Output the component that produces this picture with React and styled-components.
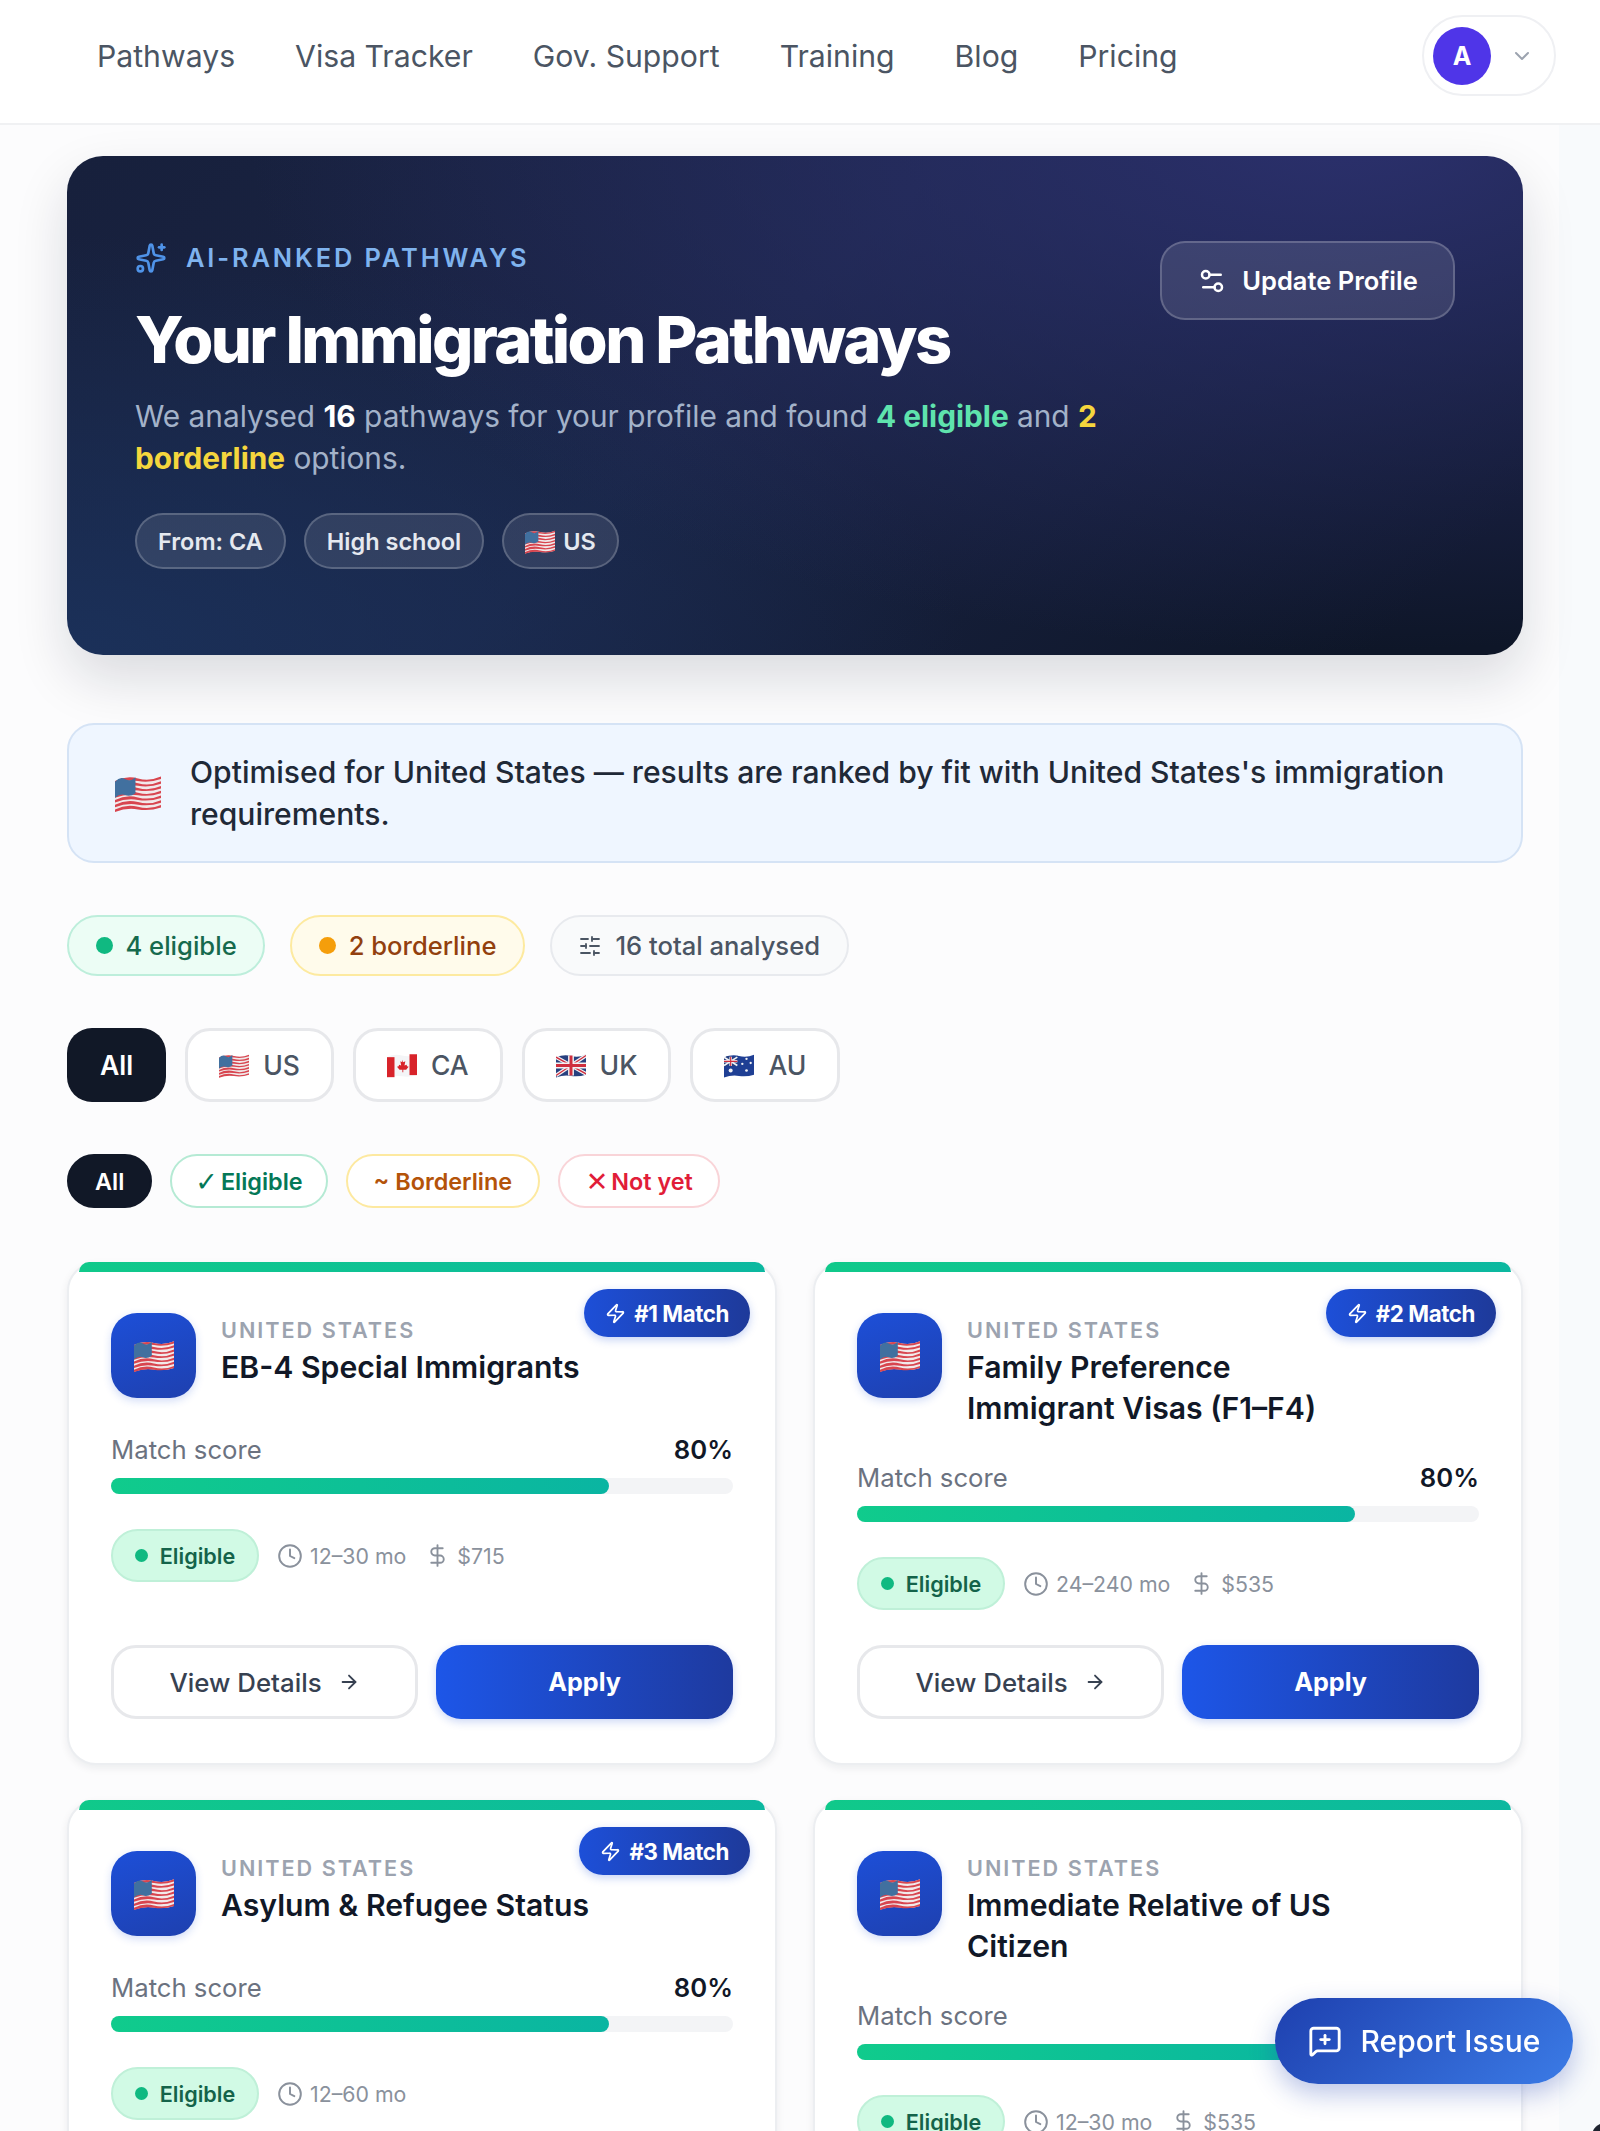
import styled, { createGlobalStyle } from "styled-components"
import {
  ArrowRight,
  ChevronDown,
  Clock,
  DollarSign,
  MessageSquarePlus,
  Settings2,
  SlidersHorizontal,
  Sparkles,
  Zap,
} from "lucide-react"

const FONT = `Inter, "Noto Sans", "Liberation Sans", sans-serif`

const GlobalStyle = createGlobalStyle`
  * { box-sizing: border-box; }
  html, body { margin: 0; padding: 0; height: 100%; overflow: hidden; }
  body {
    background: linear-gradient(90deg, #fcfcfd 1559px, #f8fafc 1559px);
    font-family: ${FONT};
  }
  #root { height: 100vh; overflow: hidden; }
`

// wavy stripe helper for the little emoji style flags
const wave = (y, h, x0 = 0, x1 = 36) => {
  const m = (x0 + x1) / 2
  return `M${x0} ${y + 2}Q${(x0 + m) / 2} ${y - 2.5} ${m} ${y}T${x1} ${y - 1.5}V${y - 1.5 + h}Q${(m + x1) / 2} ${y + h + 1.5} ${m} ${y + h}T${x0} ${y + 2 + h}Z`
}

function Flag({ code, size = 36 }) {
  const h = (size * 30) / 36
  return (
    <svg width={size} height={h} viewBox="0 0 36 30" style={{ flexShrink: 0, display: "block" }}>
      {code === "US" && (
        <>
          <path d={wave(3.5, 24)} fill="#f1e9ea" />
          {[0, 1, 2, 3, 4, 5, 6].map((i) => (
            <path key={i} d={wave(3.5 + i * 3.7, 2)} fill="#d8454f" />
          ))}
          <path d={wave(4, 12.5, 0, 16)} fill="#41709f" />
        </>
      )}
      {code === "CA" && (
        <>
          <path d={wave(3, 25)} fill="#f4f5f7" />
          <path d="M0 5h9v24H0z" fill="#d8232a" />
          <path d="M27 1.5h9v25h-9z" fill="#d8232a" />
          <path d="M18 8l1.6 3 2.4-1-1 5 2.5-1 .5 2 2 .5-3 3.5h-3.5v3h-1v-3H15l-3-3.5 2-.5.5-2 2.5 1-1-5 2.4 1z" fill="#d8232a" />
        </>
      )}
      {code === "UK" && (
        <>
          <path d={wave(3.5, 24)} fill="#27407f" />
          <path d="M0 5l36 20M36 3L0 27" stroke="#f2f2f4" strokeWidth="4.5" />
          <path d="M0 5l36 20M36 3L0 27" stroke="#cf2e3e" strokeWidth="1.6" />
          <path d="M18 3v24M0 15h36" stroke="#f2f2f4" strokeWidth="7" />
          <path d="M18 3v24M0 15h36" stroke="#cf2e3e" strokeWidth="3.6" />
        </>
      )}
      {code === "AU" && (
        <>
          <path d={wave(3.5, 24)} fill="#1f3f94" />
          <path d={wave(4.5, 11, 0, 16)} fill="#27407f" />
          <path d="M0 5l16 10M16 5L0 15" stroke="#f2f2f4" strokeWidth="2" />
          <path d="M8 4.5v11M0 10h16" stroke="#f2f2f4" strokeWidth="3" />
          <path d="M8 4.5v11M0 10h16" stroke="#cf2e3e" strokeWidth="1.4" />
          <circle cx="8" cy="21" r="2.4" fill="#f2f2f4" />
          <circle cx="27" cy="7" r="1.4" fill="#f2f2f4" />
          <circle cx="22" cy="13" r="1.4" fill="#f2f2f4" />
          <circle cx="32" cy="12" r="1.4" fill="#f2f2f4" />
          <circle cx="27" cy="21" r="1.6" fill="#f2f2f4" />
        </>
      )}
    </svg>
  )
}

const Nav = styled.header`
  height: 125px;
  background: #fff;
  border-bottom: 2px solid #f0f1f3;
  display: flex;
  align-items: center;
  justify-content: space-between;
  padding: 0 44px 12px 97px;
`
const NavLinks = styled.nav`
  display: flex;
  gap: 60px;
`
const NavLink = styled.a`
  font-size: 30.2px;
  color: #4b5563;
  font-weight: 400;
`
const UserPill = styled.div`
  width: 134px;
  height: 81px;
  border: 2px solid #eff0f3;
  border-radius: 41px;
  display: flex;
  align-items: center;
  gap: 19px;
  padding-left: 9px;
  color: #9ca3af;
`
const Avatar = styled.div`
  width: 58px;
  height: 58px;
  border-radius: 50%;
  background: #4f35e8;
  color: #fff;
  font-size: 25px;
  font-weight: 700;
  display: flex;
  align-items: center;
  justify-content: center;
`

const Main = styled.main`
  width: 1590px;
  padding: 31px 67px 0;
`
const Hero = styled.section`
  height: 499px;
  border-radius: 36px;
  padding: 85px 68px;
  display: flex;
  justify-content: space-between;
  align-items: flex-start;
  color: #fff;
  background:
    radial-gradient(1100px 520px at 88% -5%, rgba(43, 48, 108, 1), rgba(43, 48, 108, 0) 100%),
    radial-gradient(900px 420px at 0% 100%, rgba(27, 50, 92, 0.9), rgba(27, 50, 92, 0) 100%),
    linear-gradient(135deg, #17203c 0%, #1a2445 45%, #0e1628 92%);
  box-shadow: 0 24px 54px rgba(15, 23, 42, 0.14);
`
const HeroBody = styled.div`
  width: 1000px;
`
const Eyebrow = styled.div`
  display: flex;
  align-items: center;
  gap: 19px;
  height: 31px;
  margin-top: 1px;
  color: #7fb3ee;
  font-size: 25.4px;
  font-weight: 600;
  letter-spacing: 2.9px;
`
const HeroTitle = styled.h1`
  margin: 28px 0 0;
  font-size: 64.8px;
  line-height: 78px;
  font-weight: 800;
  letter-spacing: -2.6px;
  color: #fff;
`
const HeroText = styled.p`
  margin: 16px 0 0;
  font-size: 29.8px;
  line-height: 42px;
  color: #a3b2c9;
`
const Hl = styled.strong`
  color: ${(p) => p.$color};
  font-weight: 700;
`
const HeroTags = styled.div`
  display: flex;
  gap: 18px;
  margin-top: 34px;
`
const HeroTag = styled.span`
  height: 56px;
  padding: 0 21px;
  border-radius: 28px;
  border: 2px solid rgba(255, 255, 255, 0.2);
  background: rgba(255, 255, 255, 0.1);
  color: #e5e9f0;
  font-size: 23.5px;
  font-weight: 600;
  display: flex;
  align-items: center;
  gap: 8px;
`
const ProfileButton = styled.button`
  width: 295px;
  height: 79px;
  flex-shrink: 0;
  border-radius: 25px;
  border: 2px solid rgba(255, 255, 255, 0.2);
  background: rgba(255, 255, 255, 0.11);
  color: #fff;
  font: 600 25.5px ${FONT};
  display: flex;
  align-items: center;
  justify-content: center;
  gap: 15px;
`

const Notice = styled.div`
  margin-top: 68px;
  height: 140px;
  padding: 0 46px;
  border-radius: 27px;
  border: 2px solid #d5e3f5;
  background: #eff6ff;
  display: flex;
  align-items: center;
  gap: 29px;
  color: #1f2937;
  font-size: 30.1px;
  line-height: 42.5px;
  font-weight: 500;
`

const Row = styled.div`
  display: flex;
  margin-top: ${(p) => p.$top}px;
  gap: ${(p) => p.$gap}px;
`
const stat = {
  green: ["#ecfdf5", "#bdeedb", "#166a4d"],
  amber: ["#fffbeb", "#fdeaa0", "#92400e"],
  gray: ["#f9fafb", "#e8eaee", "#4b5563"],
}
const StatPill = styled.div`
  height: 61px;
  padding: 0 26.5px;
  border-radius: 31px;
  border: 2px solid ${(p) => stat[p.$tone][1]};
  background: ${(p) => stat[p.$tone][0]};
  color: ${(p) => stat[p.$tone][2]};
  font-size: 25.6px;
  font-weight: 500;
  display: flex;
  align-items: center;
  gap: 13px;
`
const Dot = styled.span`
  width: ${(p) => p.$size}px;
  height: ${(p) => p.$size}px;
  border-radius: 50%;
  background: ${(p) => p.$color};
  flex-shrink: 0;
`
const CountryTab = styled.button`
  height: 74px;
  padding: 0 ${(p) => (p.$active ? 33 : 31)}px;
  border-radius: 25px;
  border: ${(p) => (p.$active ? "none" : "3px solid #e7e8eb")};
  background: ${(p) => (p.$active ? "#111827" : "#fff")};
  color: ${(p) => (p.$active ? "#fff" : "#4b5563")};
  font: ${(p) => (p.$active ? 600 : 500)} 26.5px ${FONT};
  display: flex;
  align-items: center;
  gap: 14px;
`
const filter = {
  dark: ["#111827", "#111827", "#fff"],
  green: ["#fff", "#b5ead4", "#047857"],
  amber: ["#fff", "#fde9a0", "#b45309"],
  red: ["#fff", "#f9d4d8", "#e11d38"],
}
const FilterChip = styled.button`
  height: 54px;
  padding: 0 ${(p) => p.$pad}px;
  border-radius: 27px;
  border: 2px solid ${(p) => filter[p.$tone][1]};
  background: ${(p) => filter[p.$tone][0]};
  color: ${(p) => filter[p.$tone][2]};
  font: 600 23.4px ${FONT};
  white-space: nowrap;
  display: flex;
  align-items: center;
`
const Glyph = styled.span`
  font-family: "DejaVu Sans", sans-serif;
  font-size: 27px;
  line-height: 1;
  margin-right: 3px;
`

const CardGrid = styled.div`
  margin-top: 54px;
  display: grid;
  grid-template-columns: 1fr 1fr;
  gap: 35px 36px;
`
const Card = styled.article`
  position: relative;
  display: flex;
  flex-direction: column;
  padding: 49px 42px 44px;
  background: #fff;
  border: 2px solid #eceef1;
  border-radius: 29px;
  box-shadow: 0 3px 8px rgba(17, 24, 39, 0.07);

  &::before {
    content: "";
    position: absolute;
    top: -2px;
    left: 10px;
    right: 10px;
    height: 10px;
    border-radius: 16px 16px 0 0;
    background: linear-gradient(90deg, #10c98a, #0cb8a0);
  }
`
const MatchBadge = styled.div`
  position: absolute;
  top: 25px;
  right: 25px;
  height: 48px;
  padding: 0 21px;
  border-radius: 24px;
  background: linear-gradient(90deg, #1d4fd8, #1e3a9a);
  box-shadow: 0 3px 8px rgba(29, 78, 216, 0.25);
  color: #fff;
  font-size: 22.3px;
  font-weight: 700;
  letter-spacing: -0.4px;
  display: flex;
  align-items: center;
  gap: 8px;
`
const CardHead = styled.div`
  display: flex;
  gap: 25px;
  align-items: flex-start;
`
const IconTile = styled.div`
  width: 85px;
  height: 85px;
  flex-shrink: 0;
  border-radius: 26px;
  background: linear-gradient(160deg, #1d4fd8, #1e40af);
  box-shadow: 0 3px 8px rgba(29, 78, 216, 0.2);
  display: flex;
  align-items: center;
  justify-content: center;
`
const CardCopy = styled.div`
  padding-top: 2px;
`
const Country = styled.div`
  color: #9ca3af;
  font-size: 21.6px;
  line-height: 30px;
  font-weight: 600;
  letter-spacing: 2px;
`
const CardTitle = styled.h3`
  margin: 2px 0 0;
  max-width: 400px;
  color: #111827;
  font-size: 30.2px;
  line-height: 40.5px;
  font-weight: 600;
`
const ScoreRow = styled.div`
  margin-top: ${(p) => p.$top}px;
  display: flex;
  justify-content: space-between;
  align-items: center;
  height: 36px;
  font-size: 25.7px;
  color: #6b7280;
`
const ScoreValue = styled.span`
  color: #111827;
  font-weight: 600;
`
const Track = styled.div`
  margin-top: 11px;
  height: 16px;
  border-radius: 8px;
  background: #f3f4f6;
`
const Fill = styled.div`
  height: 100%;
  border-radius: 8px;
  background: linear-gradient(90deg, #10cb8c, #0ab5a2);
`
const MetaRow = styled.div`
  margin-top: 35px;
  margin-bottom: 35px;
  display: flex;
  align-items: center;
  color: #8a919c;
  font-size: 21.3px;
`
const StatusPill = styled.div`
  height: 53px;
  width: 148px;
  border-radius: 27px;
  border: 2px solid #bff0d8;
  background: #d1fae5;
  color: #14634a;
  font-size: 21.6px;
  font-weight: 600;
  display: flex;
  align-items: center;
  justify-content: center;
  gap: 12px;
  margin-right: 18px;
`
const MetaItem = styled.span`
  display: flex;
  align-items: center;
  gap: 7px;
  margin-right: 19px;
`
const Actions = styled.div`
  margin-top: auto;
  display: flex;
  gap: 18px;
`
const GhostButton = styled.button`
  flex: 1.015;
  height: 74px;
  border-radius: 25px;
  border: 3px solid #e7e8eb;
  background: #fff;
  color: #374151;
  font: 500 25.8px ${FONT};
  display: flex;
  align-items: center;
  justify-content: center;
  gap: 16px;
`
const ApplyButton = styled.button`
  flex: 1;
  height: 74px;
  border-radius: 25px;
  border: none;
  background: linear-gradient(90deg, #1d56e8, #1e3a9f);
  box-shadow: 0 3px 8px rgba(29, 78, 216, 0.22);
  color: #fff;
  font: 700 25.2px ${FONT};
`
const ReportButton = styled.button`
  position: fixed;
  left: 1275px;
  top: 1998px;
  width: 298px;
  height: 86px;
  border-radius: 43px;
  border: none;
  background: linear-gradient(135deg, #1e40af, #3b7be6);
  box-shadow: 0 10px 26px rgba(30, 64, 175, 0.3);
  color: #fff;
  font: 500 30px ${FONT};
  display: flex;
  align-items: center;
  justify-content: center;
  gap: 19px;
`
// the dark sliver poking in at the bottom right corner of the window
const CornerSliver = styled.div`
  position: fixed;
  right: -18px;
  bottom: -18px;
  width: 26px;
  height: 26px;
  border-radius: 50%;
  background: #1f2430;
`

const pathways = [
  { title: "EB-4 Special Immigrants", rank: 1, time: "12–30 mo", fee: "$715" },
  { title: "Family Preference Immigrant Visas (F1–F4)", rank: 2, time: "24–240 mo", fee: "$535" },
  { title: "Asylum & Refugee Status", rank: 3, time: "12–60 mo" },
  { title: "Immediate Relative of US Citizen", time: "12–30 mo", fee: "$535" },
]

function PathwayCard({ item }) {
  const twoLines = item.title.length > 25
  return (
    <Card>
      {item.rank && (
        <MatchBadge>
          <Zap size={21} strokeWidth={2} />#{item.rank} Match
        </MatchBadge>
      )}
      <CardHead>
        <IconTile>
          <Flag code="US" size={40} />
        </IconTile>
        <CardCopy>
          <Country>UNITED STATES</Country>
          <CardTitle>{item.title}</CardTitle>
        </CardCopy>
      </CardHead>
      <ScoreRow $top={twoLines ? 31 : 33}>
        <span>Match score</span>
        <ScoreValue>80%</ScoreValue>
      </ScoreRow>
      <Track>
        <Fill style={{ width: "80%" }} />
      </Track>
      <MetaRow>
        <StatusPill>
          <Dot $size={13} $color="#10b981" />
          Eligible
        </StatusPill>
        <MetaItem>
          <Clock size={26} strokeWidth={1.8} />
          {item.time}
        </MetaItem>
        {item.fee && (
          <MetaItem>
            <DollarSign size={25} strokeWidth={1.8} />
            {item.fee}
          </MetaItem>
        )}
      </MetaRow>
      <Actions>
        <GhostButton>
          View Details <ArrowRight size={22} strokeWidth={2} />
        </GhostButton>
        <ApplyButton>Apply</ApplyButton>
      </Actions>
    </Card>
  )
}

export default function App() {
  return (
    <>
      <GlobalStyle />
      <Nav>
        <NavLinks>
          {["Pathways", "Visa Tracker", "Gov. Support", "Training", "Blog", "Pricing"].map((l) => (
            <NavLink key={l}>{l}</NavLink>
          ))}
        </NavLinks>
        <UserPill>
          <Avatar>A</Avatar>
          <ChevronDown size={24} strokeWidth={2} />
        </UserPill>
      </Nav>
      <Main>
        <Hero>
          <HeroBody>
            <Eyebrow>
              <Sparkles size={32} color="#4f93e8" strokeWidth={2} />
              AI-RANKED PATHWAYS
            </Eyebrow>
            <HeroTitle>Your Immigration Pathways</HeroTitle>
            <HeroText>
              We analysed <Hl $color="#fff">16</Hl> pathways for your profile and found{" "}
              <Hl $color="#5fe3ad">4 eligible</Hl> and <Hl $color="#f5d63d">2 borderline</Hl> options.
            </HeroText>
            <HeroTags>
              <HeroTag>From: CA</HeroTag>
              <HeroTag>High school</HeroTag>
              <HeroTag>
                <Flag code="US" size={30} /> US
              </HeroTag>
            </HeroTags>
          </HeroBody>
          <ProfileButton>
            <Settings2 size={30} strokeWidth={2} />
            Update Profile
          </ProfileButton>
        </Hero>

        <Notice>
          <Flag code="US" size={46} />
          <span>
            Optimised for United States — results are ranked by fit with United States's immigration requirements.
          </span>
        </Notice>

        <Row $top={52} $gap={25}>
          <StatPill $tone="green">
            <Dot $size={17} $color="#10b981" />4 eligible
          </StatPill>
          <StatPill $tone="amber">
            <Dot $size={17} $color="#f59e0b" />2 borderline
          </StatPill>
          <StatPill $tone="gray">
            <SlidersHorizontal size={24} strokeWidth={1.8} />
            16 total analysed
          </StatPill>
        </Row>

        <Row $top={52} $gap={19}>
          <CountryTab $active>All</CountryTab>
          {["US", "CA", "UK", "AU"].map((c) => (
            <CountryTab key={c}>
              <Flag code={c} size={30} />
              {c}
            </CountryTab>
          ))}
        </Row>

        <Row $top={52} $gap={18}>
          <FilterChip $tone="dark" $pad={26}>All</FilterChip>
          <FilterChip $tone="green" $pad={23}><Glyph>✓</Glyph>Eligible</FilterChip>
          <FilterChip $tone="amber" $pad={26}>~ Borderline</FilterChip>
          <FilterChip $tone="red" $pad={25.5}><Glyph>✕</Glyph>Not yet</FilterChip>
        </Row>

        <CardGrid>
          {pathways.map((p) => (
            <PathwayCard key={p.title} item={p} />
          ))}
        </CardGrid>
      </Main>
      <ReportButton>
        <MessageSquarePlus size={34} strokeWidth={2} />
        Report Issue
      </ReportButton>
      <CornerSliver />
    </>
  )
}
